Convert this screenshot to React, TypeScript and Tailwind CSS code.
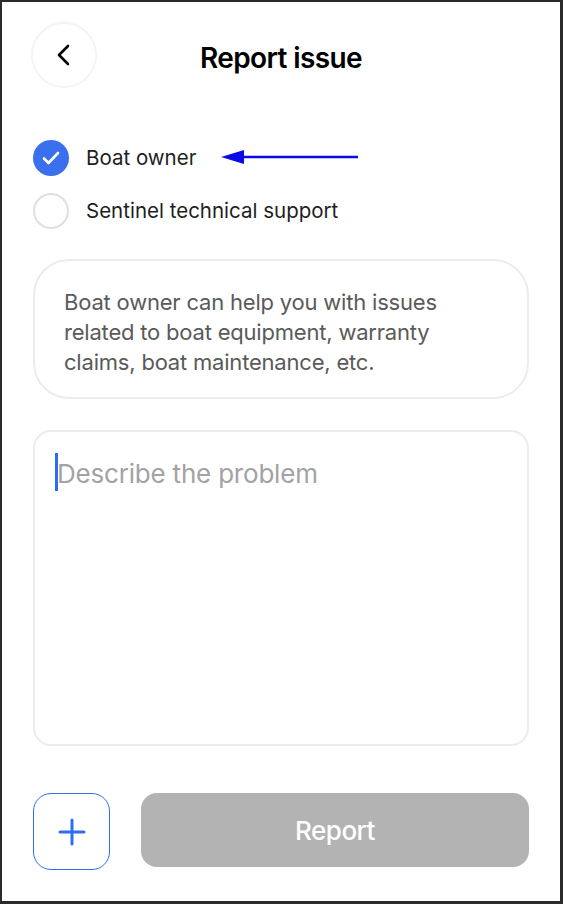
import React, { useState } from 'react';

const font = { fontFamily: 'Inter, "Liberation Sans", sans-serif' };

export default function App() {
  const [who, setWho] = useState<'owner' | 'support'>('owner');

  return (
    <div className="h-[904px] w-[563px] bg-[#2b2b2b] pt-[2px] pl-[2px] pr-[3px] pb-[3px]" style={font}>
      <div className="h-full w-full bg-white flex flex-col px-[31px]">
        {/* header */}
        <div className="relative flex items-center justify-center h-[68px] mt-[20px]">
          <button className="absolute -left-[2px] top-0 w-[66px] h-[66px] rounded-full border-2 border-[#f4f4f4] flex items-center justify-center">
            <svg width="16" height="22" viewBox="0 0 16 22" fill="none">
              <path d="M12 2 L3 11 L12 20" stroke="#000" strokeWidth="2.6" strokeLinecap="round" strokeLinejoin="round" />
            </svg>
          </button>
          <h1 className="text-[28px] font-semibold tracking-[-0.6px] text-black pt-[3px]">Report issue</h1>
        </div>

        {/* radios */}
        <div className="mt-[50px] flex flex-col gap-[17px]">
          <label className="relative flex items-center gap-[17px] cursor-pointer" onClick={() => setWho('owner')}>
            {who === 'owner' ? (
              <span className="w-[36px] h-[36px] rounded-full bg-[#3a70ee] flex items-center justify-center">
                <svg width="18" height="14" viewBox="0 0 18 14" fill="none">
                  <path d="M2 7.5 L6.5 12 L16 2" stroke="#fff" strokeWidth="2.6" strokeLinecap="round" strokeLinejoin="round" />
                </svg>
              </span>
            ) : (
              <span className="w-[36px] h-[36px] rounded-full border-2 border-[#e0e0e0]" />
            )}
            <span className="text-[20.5px] text-[#1e1e1e]">Boat owner</span>
            <svg className="absolute left-[188px] top-[9px]" width="138" height="16" viewBox="0 0 138 16">
              <line x1="18" y1="8" x2="137" y2="8" stroke="#0a0ae6" strokeWidth="2.5" />
              <polygon points="0,8 23,1 23,15" fill="#0a0ae6" />
            </svg>
          </label>
          <label className="flex items-center gap-[17px] cursor-pointer" onClick={() => setWho('support')}>
            {who === 'support' ? (
              <span className="w-[36px] h-[36px] rounded-full bg-[#3a70ee] flex items-center justify-center">
                <svg width="18" height="14" viewBox="0 0 18 14" fill="none">
                  <path d="M2 7.5 L6.5 12 L16 2" stroke="#fff" strokeWidth="2.6" strokeLinecap="round" strokeLinejoin="round" />
                </svg>
              </span>
            ) : (
              <span className="w-[36px] h-[36px] rounded-full border-2 border-[#e0e0e0]" />
            )}
            <span className="text-[20.5px] text-[#1e1e1e]">Sentinel technical support</span>
          </label>
        </div>

        {/* info */}
        <div className="mt-[30px] rounded-[36px] border-2 border-[#ececec] pl-[29px] pr-[50px] pt-[26px] pb-[20px]">
          <p className="text-[22px] leading-[30px] text-[#5a5a5a] tracking-[-0.2px]">
            {who === 'owner'
              ? 'Boat owner can help you with issues related to boat equipment, warranty claims, boat maintenance, etc.'
              : 'Sentinel technical support can help you with issues related to the app, devices and connectivity.'}
          </p>
        </div>

        {/* description */}
        <div className="mt-[31px] h-[316px] rounded-[18px] border-2 border-[#ececec] relative">
          <span className="absolute left-[20px] top-[21px] w-[3px] h-[38px] bg-[#2e6cf0]" />
          <textarea
            placeholder="Describe the problem"
            className="w-full h-full resize-none bg-transparent outline-none pl-[22px] pt-[26px] pr-[20px] text-[26px] leading-[32px] text-[#222] placeholder:text-[#a3a3a3] tracking-[-0.2px]"
          />
        </div>

        {/* actions */}
        <div className="mt-[47px] flex gap-[31px]">
          <button className="w-[77px] h-[77px] rounded-[18px] border-[1.5px] border-[#2f6df2] flex items-center justify-center">
            <svg width="28" height="28" viewBox="0 0 28 28" fill="none">
              <path d="M14 2 V26 M2 14 H26" stroke="#2f6df2" strokeWidth="3" strokeLinecap="round" />
            </svg>
          </button>
          <button className="flex-1 h-[74px] rounded-[16px] bg-[#b3b3b3] text-white text-[26px] font-medium tracking-[-0.5px]">
            Report
          </button>
        </div>
      </div>
    </div>
  );
}
